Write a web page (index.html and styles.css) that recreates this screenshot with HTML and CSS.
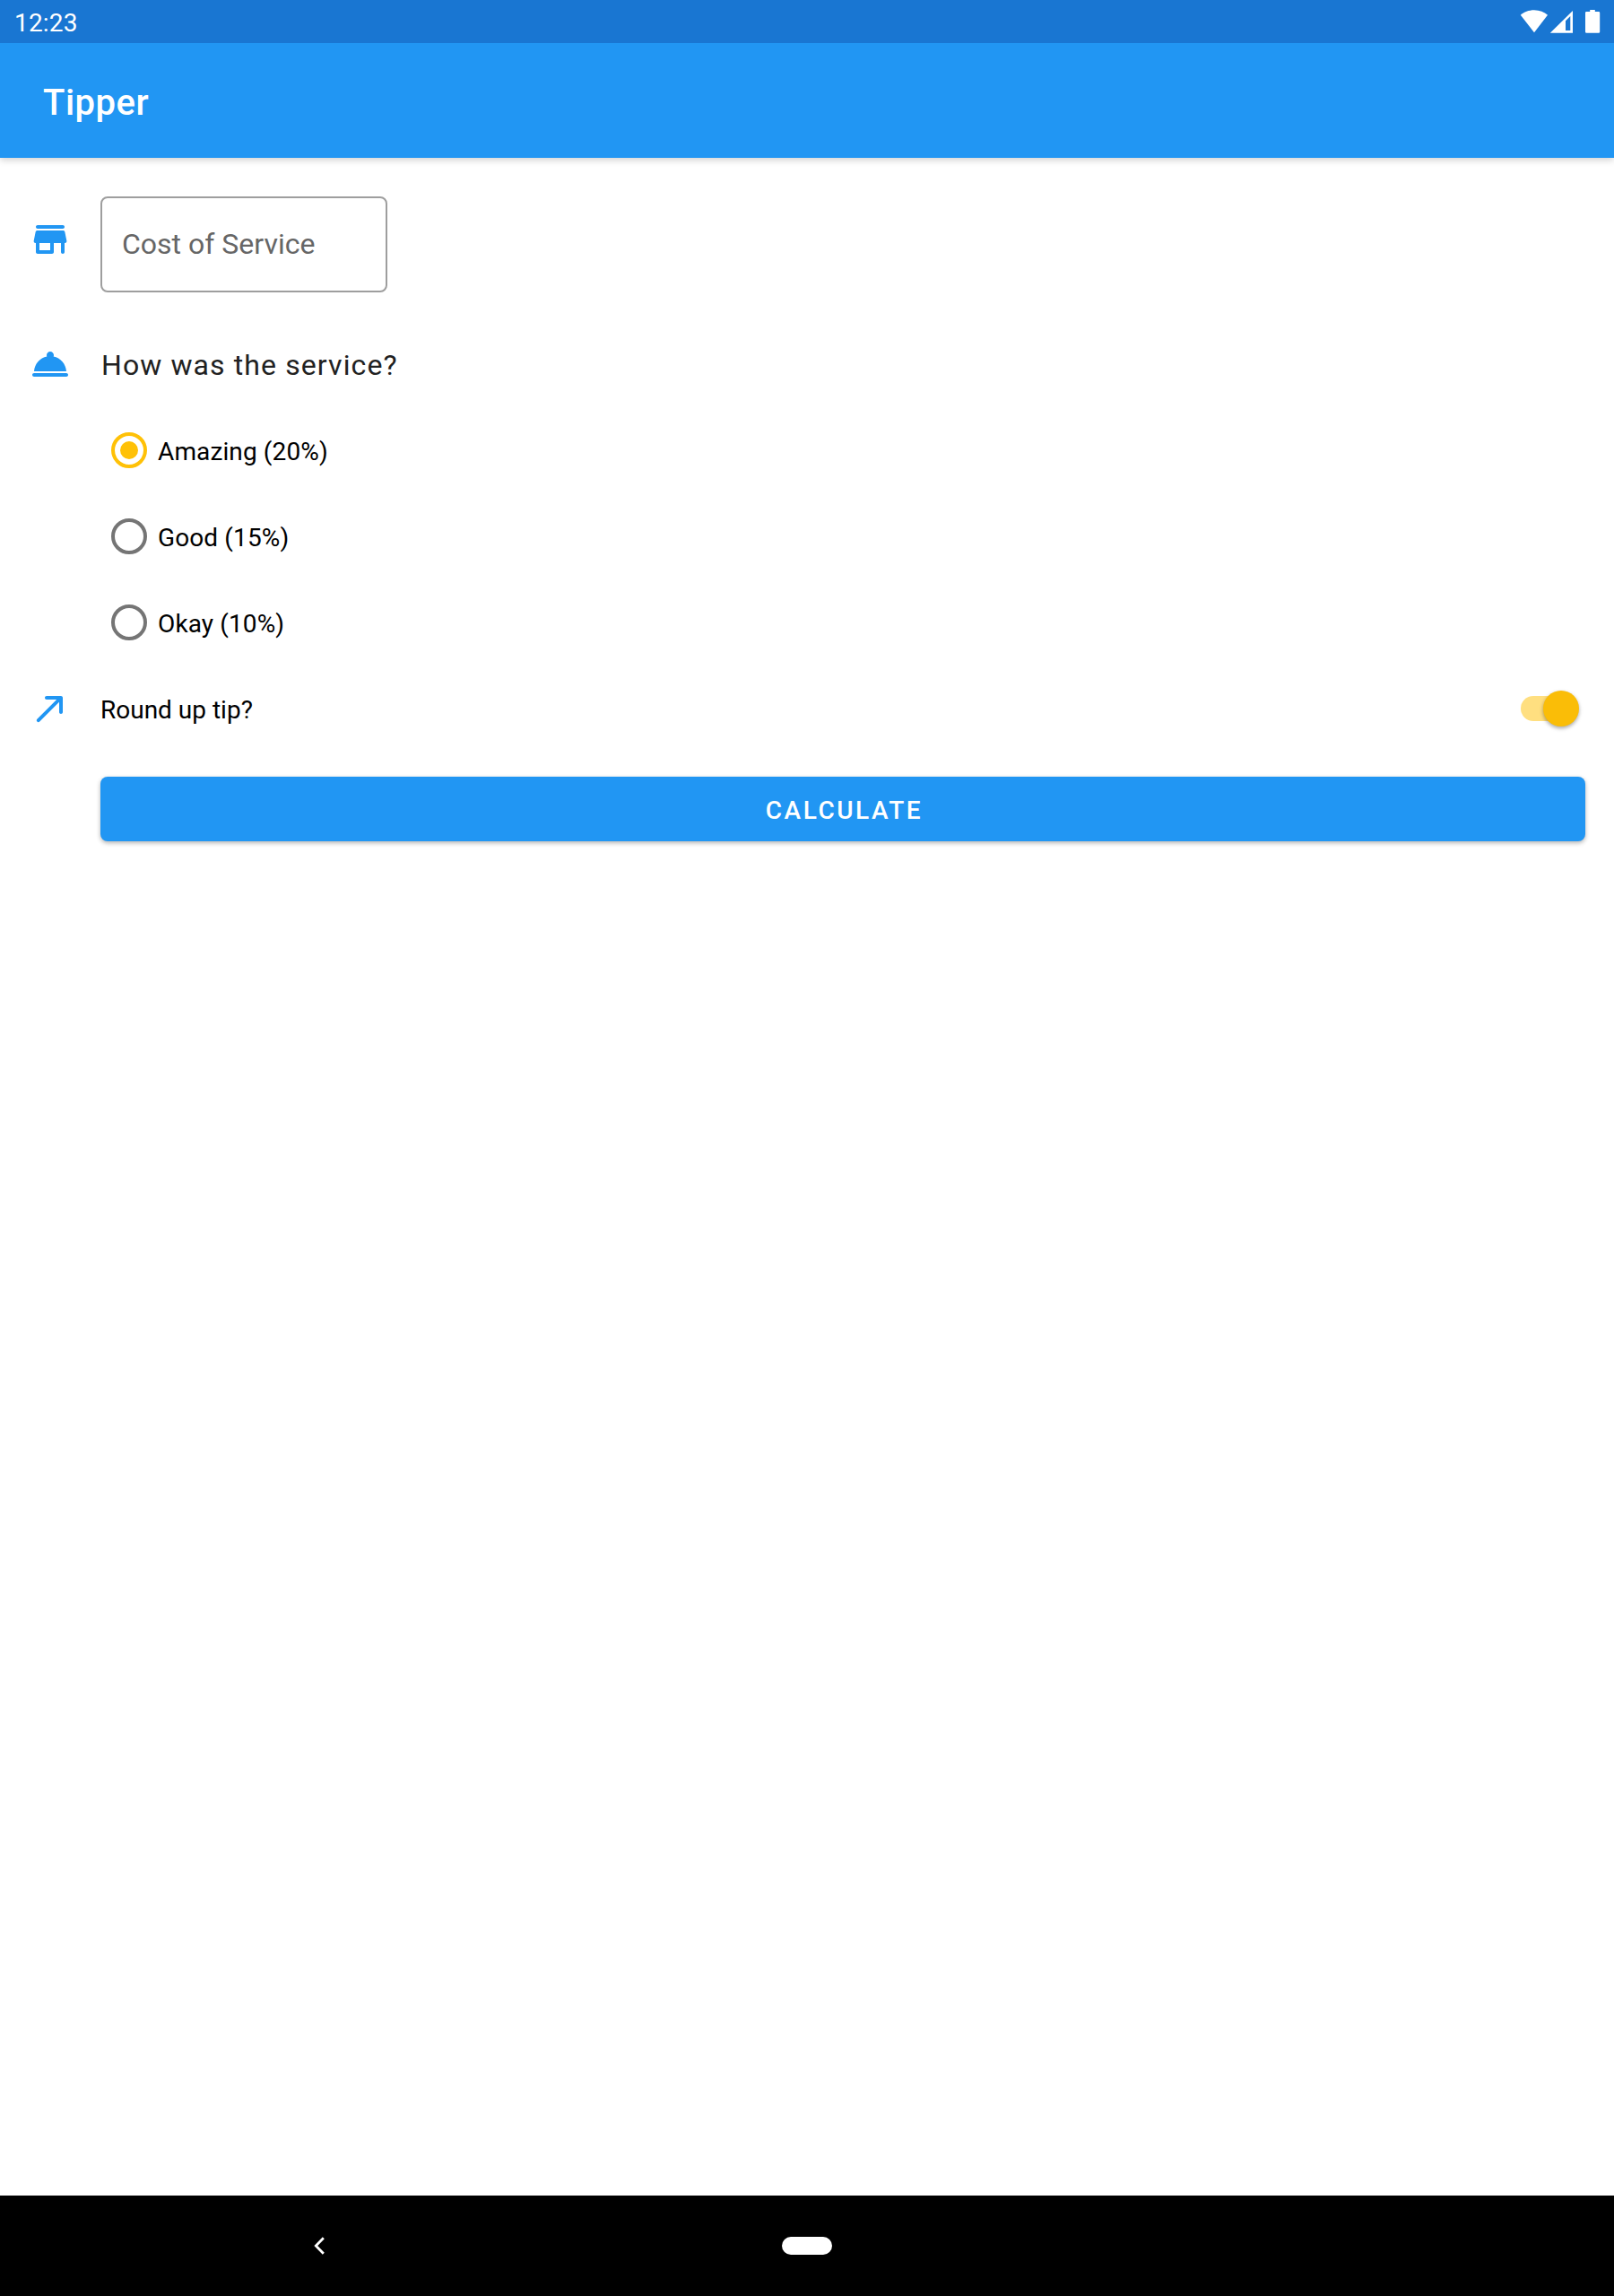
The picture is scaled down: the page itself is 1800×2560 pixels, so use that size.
FILE: index.html
```html
<!DOCTYPE html>
<html lang="en">
<head>
<meta charset="utf-8">
<title>Tipper</title>
<link rel="stylesheet" href="styles.css">
</head>
<body>
<div class="screen">
  <header class="status-bar">
    <span class="clock">12:23</span>
    <svg class="status-icons" width="90" height="28" viewBox="0 0 90 28" fill="#fff">
      <path d="M.8 6.7C4.5 3.3 10 1.2 16 1.2s11.300 2.100 15 5.500L16 26.200z"/>
      <path fill-rule="evenodd" d="M59 2v24.800H33.800zM56.300 8L51 13.300V24h5.300z"/>
      <path d="M78.200 1h5.600v2h4.200q1.200 0 1.200 1.200v21.200q0 1.400-1.400 1.400H74.400q-1.400 0-1.400-1.400V4.200Q73 3 74.200 3h4z"/>
    </svg>
  </header>
  <div class="app-bar"><h1 class="title">Tipper</h1></div>
  <main class="content">
    <div class="row cost-row">
      <svg class="icon" viewBox="0 0 24 24"><path d="M5 6h14c.55 0 1-.45 1-1s-.45-1-1-1H5c-.55 0-1 .45-1 1s.45 1 1 1zm15.160 1.800c-.09-.46-.5-.8-.98-.8H4.820c-.48 0-.89.34-.98.8l-1 5c-.12.62.35 1.200.98 1.200H4v5c0 .55.45 1 1 1h8c.55 0 1-.45 1-1v-5h4v5c0 .55.45 1 1 1s1-.45 1-1v-5h.18c.63 0 1.100-.58.98-1.200l-1-5zM12 18H6v-4h6v4z"/></svg>
      <div class="field">Cost of Service</div>
    </div>
    <div class="row question-row">
      <svg class="icon" viewBox="0 0 24 24"><path d="M3 17h18c.55 0 1 .45 1 1s-.45 1-1 1H3c-.55 0-1-.45-1-1s.45-1 1-1zm10.840-9.210c.1-.24.16-.51.16-.79 0-1.100-.9-2-2-2s-2 .9-2 2c0 .28.06.55.16.79C6.250 8.600 3.270 11.930 3 16h18c-.27-4.070-3.250-7.400-7.160-8.210z"/></svg>
      <span class="question">How was the service?</span>
    </div>
    <div class="options">
      <div class="option"><span class="radio checked"></span><span class="label">Amazing (20%)</span></div>
      <div class="option"><span class="radio"></span><span class="label">Good (15%)</span></div>
      <div class="option"><span class="radio"></span><span class="label">Okay (10%)</span></div>
    </div>
    <div class="row round-row">
      <svg class="icon" viewBox="0 0 24 24"><path d="M9 6c0 .56.45 1 1 1h5.590L4.700 17.890c-.39.39-.39 1.020 0 1.410.39.39 1.020.39 1.410 0L17 8.410V14c0 .55.45 1 1 1s1-.45 1-1V6c0-.55-.45-1-1-1h-8c-.55 0-1 .45-1 1z"/></svg>
      <span class="label">Round up tip?</span>
      <span class="switch"><span class="thumb"></span></span>
    </div>
    <div class="calculate"><span>CALCULATE</span></div>
  </main>
  <nav class="nav-bar">
    <svg class="back" width="14" height="22" viewBox="0 0 14 22"><path d="M11.800 2.300L3.300 11l8.500 8.700" fill="none" stroke="#fff" stroke-width="2.800"/></svg>
    <span class="home"></span>
  </nav>
</div>
</body>
</html>
```
FILE: styles.css
```css
* { box-sizing: border-box; }
body { margin: 0; background: #fff; font-family: Roboto, "Liberation Sans", sans-serif; font-size: 28px; color: #000; }
.screen { display: flex; flex-direction: column; width: 1800px; height: 2560px; }

.status-bar { position: relative; z-index: 1; display: flex; justify-content: space-between; align-items: flex-start; height: 48px; padding: 10px 15px 0 16px; background: #1976d2; color: #fff; }
.clock { line-height: 31px; letter-spacing: .2px; }

.app-bar { height: 128px; padding: 4px 48px 0; background: #2196f3; color: #fff; box-shadow: 0 2px 8px rgba(0, 0, 0, .2); }
.title { margin: 0; font-size: 40px; line-height: 126px; font-weight: 500; letter-spacing: .5px; }

.content { flex: 1; display: flex; flex-direction: column; padding: 43px 32px 0; }
.row { display: flex; align-items: center; }
.icon { width: 48px; height: 48px; margin-right: 32px; fill: #2196f3; flex: none; }
.cost-row { align-items: flex-start; height: 107px; }
.cost-row .icon { margin-top: 24px; }
.field { width: 320px; height: 107px; padding-left: 22px; border: 2px solid #9e9e9e; border-radius: 8px; font-size: 32px; line-height: 103px; color: #666; }
.question-row { height: 48px; margin-top: 56px; }
.question { font-size: 32px; line-height: 48px; padding: 2px 0 0 1px; letter-spacing: 1.1px; color: #212121; }

.options { margin: 24px 0 0 92px; }
.option { display: flex; align-items: center; height: 96px; }
.option .label { margin-left: 12px; letter-spacing: .12px; }
.label { padding-top: 4px; line-height: 32px; }
.radio { display: flex; align-items: center; justify-content: center; width: 40px; height: 40px; border: 4px solid #757575; border-radius: 50%; }
.radio.checked { border-color: #ffc107; }
.radio.checked::before { content: ""; width: 20px; height: 20px; border-radius: 50%; background: #ffc107; }

.round-row { height: 48px; margin-top: 24px; }
.switch { display: flex; align-items: center; justify-content: flex-end; width: 65px; height: 28px; margin: 0 7px 0 auto; border-radius: 14px; background: linear-gradient(90deg, #ffdf80 50px, transparent 50px); }
.thumb { width: 40px; height: 40px; border-radius: 50%; background: #fabd07; box-shadow: 0 2px 4px rgba(0, 0, 0, .35); flex: none; }

.calculate { display: flex; justify-content: center; height: 72px; margin: 52px 0 0 80px; padding-left: 3px; border-radius: 8px; background: #2196f3; color: #fff; font-weight: 500; line-height: 76px; letter-spacing: 2.5px; box-shadow: 0 2px 5px rgba(0, 0, 0, .3); }

.nav-bar { display: grid; grid-template-columns: 349px 523px 1fr; align-items: center; height: 112px; background: #000; }
.back { grid-column: 2; }
.home { width: 56px; height: 20px; border-radius: 10px; background: #fff; }
```
